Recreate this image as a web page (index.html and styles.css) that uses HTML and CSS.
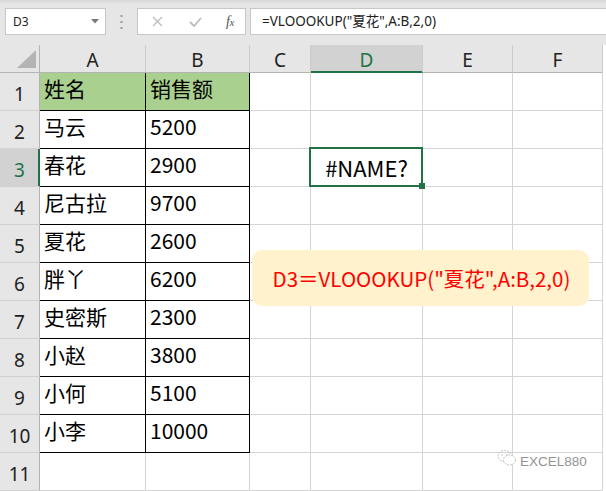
FILE: index.html
```html
<!DOCTYPE html>
<html>
<head>
<meta charset="utf-8">
<link rel="stylesheet" href="styles.css">
</head>
<body>
<div class="app">
  <div class="toolbar">
    <div class="namebox">
      <span class="nb-text">D3</span>
      <svg class="nb-arrow" width="8" height="5" viewBox="0 0 8 5"><path d="M0 0H8L4 4.5Z" fill="#7a7a7a"/></svg>
    </div>
    <div class="sep">
      <svg width="3" height="14" viewBox="0 0 3 14"><rect x="0.5" y="0" width="2" height="2" fill="#9a9a9a"/><rect x="0.5" y="6" width="2" height="2" fill="#9a9a9a"/><rect x="0.5" y="12" width="2" height="2" fill="#9a9a9a"/></svg>
    </div>
    <div class="fxbtns">
      <svg class="btn-x" width="11" height="11" viewBox="0 0 11 11"><path d="M1 1L10 10M10 1L1 10" stroke="#bdbdbd" stroke-width="1.4" fill="none"/></svg>
      <svg class="btn-ok" width="13" height="10" viewBox="0 0 13 10"><path d="M1 5L5 9L12 1" stroke="#bdbdbd" stroke-width="1.8" fill="none"/></svg>
      <span class="btn-fx">f<span class="fx-x">x</span></span>
    </div>
    <div class="formula">=VLOOOKUP("夏花",A:B,2,0)</div>
  </div>

  <div class="sheet">
    <div class="grid">
      <div class="ch corner"><span class="tri"></span></div>
      <div class="ch">A</div>
      <div class="ch">B</div>
      <div class="ch">C</div>
      <div class="ch sel">D</div>
      <div class="ch">E</div>
      <div class="ch">F</div>

      <div class="rh">1</div>
      <div class="c t hd">姓名</div><div class="c t hd">销售额</div><div class="c"></div><div class="c"></div><div class="c"></div><div class="c"></div>

      <div class="rh">2</div>
      <div class="c t">马云</div><div class="c t">5200</div><div class="c"></div><div class="c"></div><div class="c"></div><div class="c"></div>

      <div class="rh sel">3</div>
      <div class="c t">春花</div><div class="c t">2900</div><div class="c"></div>
      <div class="c active"><span class="err">#NAME?</span><span class="selbox"></span><span class="handle"></span></div>
      <div class="c"></div><div class="c"></div>

      <div class="rh">4</div>
      <div class="c t">尼古拉</div><div class="c t">9700</div><div class="c"></div><div class="c"></div><div class="c"></div><div class="c"></div>

      <div class="rh">5</div>
      <div class="c t">夏花</div><div class="c t">2600</div><div class="c"></div><div class="c"></div><div class="c"></div><div class="c"></div>

      <div class="rh">6</div>
      <div class="c t">胖丫</div><div class="c t">6200</div><div class="c"></div><div class="c"></div><div class="c"></div><div class="c"></div>

      <div class="rh">7</div>
      <div class="c t">史密斯</div><div class="c t">2300</div><div class="c"></div><div class="c"></div><div class="c"></div><div class="c"></div>

      <div class="rh">8</div>
      <div class="c t">小赵</div><div class="c t">3800</div><div class="c"></div><div class="c"></div><div class="c"></div><div class="c"></div>

      <div class="rh">9</div>
      <div class="c t">小何</div><div class="c t">5100</div><div class="c"></div><div class="c"></div><div class="c"></div><div class="c"></div>

      <div class="rh">10</div>
      <div class="c t">小李</div><div class="c t">10000</div><div class="c"></div><div class="c"></div><div class="c"></div><div class="c"></div>

      <div class="rh">11</div>
      <div class="c"></div><div class="c"></div><div class="c"></div><div class="c"></div><div class="c"></div><div class="c"></div>
    </div>

    <div class="callout">D3＝VLOOOKUP("夏花",A:B,2,0)</div>

    <div class="watermark">
      <svg width="20" height="18" viewBox="0 0 20 18">
        <ellipse cx="7.5" cy="7" rx="6.5" ry="5.5" fill="none" stroke="#c4c4c4" stroke-width="1" stroke-dasharray="2 1"/>
        <ellipse cx="12.5" cy="11" rx="6" ry="5" fill="#fff" stroke="#c4c4c4" stroke-width="1" stroke-dasharray="2 1"/>
        <circle cx="5" cy="6" r="0.8" fill="#c4c4c4"/>
        <circle cx="10" cy="6" r="0.8" fill="#c4c4c4"/>
      </svg>
      <span>EXCEL880</span>
    </div>
  </div>
</div>
</body>
</html>
```

FILE: styles.css
```css
* { box-sizing: border-box; }
html, body { margin: 0; padding: 0; background: #ffffff; }
.app { width: 606px; height: 491px; overflow: hidden; font-family: "Noto Sans", "Noto Sans CJK SC", sans-serif; }

.toolbar {
  height: 45px;
  background: linear-gradient(#d6d6d6 0, #e6e6e6 4px, #e6e6e6 100%);
  display: flex;
  align-items: flex-start;
  padding: 8px 0 0 5px;
}
.namebox {
  width: 101px; height: 27px;
  background: #fff;
  border: 1px solid #c6c6c6;
  display: flex; align-items: center; justify-content: space-between;
  padding: 0 6px 0 7px;
  font-size: 12px; color: #222;
}
.nb-text { line-height: 1; }
.sep { width: 31px; height: 27px; display: flex; align-items: center; justify-content: center; }
.fxbtns {
  width: 109px; height: 27px;
  background: #fff;
  border: 1px solid #c6c6c6;
  position: relative;
  display: flex; align-items: center;
  padding-left: 14px;
}
.btn-x { margin-right: 26px; }
.btn-ok { margin-right: 24px; }
.btn-fx { font-family: "Liberation Serif", serif; font-style: italic; font-size: 14px; color: #555; letter-spacing: -0.5px; }
.fx-x { font-size: 11px; }
.formula {
  flex: 1;
  margin-left: 4px;
  height: 27px;
  background: #fff;
  border: 1px solid #c6c6c6;
  border-right: none;
  padding-left: 11px;
  font-size: 13.5px; line-height: 25px; color: #222;
  font-family: "Noto Sans", "Noto Sans CJK SC", sans-serif;
  white-space: nowrap;
}

.sheet { position: relative; height: 446px; }
.grid {
  display: grid;
  grid-template-columns: 40px 106px 104px 61px 112px 90px 90px;
  grid-template-rows: 28px repeat(11, 38px);
}
.ch {
  background: #e6e6e6;
  border-right: 1px solid #cbcbcb;
  border-bottom: 1px solid #b4b4b4;
  display: flex; align-items: center; justify-content: center;
  font-size: 19px; color: #222;
  padding-top: 2px;
}
.ch.corner { position: relative; border-right-color: #b4b4b4; }
.tri {
  position: absolute; right: 3px; bottom: 4px;
  width: 19px; height: 18px;
  background: #b4b4b4;
  clip-path: polygon(100% 0, 100% 100%, 0 100%);
}
.ch.sel {
  background: #d2d2d2;
  color: #217346;
  border-bottom-color: #217346;
  box-shadow: inset 0 -1px 0 #217346;
}
.rh {
  background: #e6e6e6;
  border-right: 1px solid #b4b4b4;
  border-bottom: 1px solid #d0d0d0;
  display: flex; align-items: center; justify-content: center;
  font-size: 19px; color: #222;
  padding-top: 4px;
}
.rh.sel {
  background: #d2d2d2;
  color: #217346;
  border-right-color: #217346;
  box-shadow: inset -1px 0 0 #217346;
}
.c {
  border-right: 1px solid #d4d4d4;
  border-bottom: 1px solid #d4d4d4;
  font-family: "Noto Sans CJK SC", sans-serif;
  font-size: 21px; color: #000;
  display: flex; align-items: center;
  padding-left: 4px;
  white-space: nowrap;
}
.c.t { border-right-color: #000; border-bottom-color: #000; padding-bottom: 7px; }
.c.hd { background: #a9d08e; }
.c.active { position: relative; justify-content: center; padding-left: 0; padding-bottom: 1px; }
.err { font-size: 22px; }
.selbox {
  position: absolute; left: -2px; top: -2px;
  width: 114px; height: 40px;
  border: 2px solid #217346;
}
.handle {
  position: absolute; left: 108px; top: 34px;
  width: 6px; height: 6px;
  background: #217346;
}

.callout {
  position: absolute; left: 252px; top: 205px;
  width: 337px; height: 56px;
  background: #fff2cc;
  border-radius: 10px;
  display: flex; align-items: center; justify-content: center;
  font-family: "Noto Sans CJK SC", sans-serif;
  font-size: 20.5px; color: #ff0000;
  white-space: nowrap;
  padding-left: 2px;
}

.watermark {
  position: absolute; left: 497px; top: 401px;
  display: flex; align-items: center; gap: 3px;
  font-family: "Liberation Sans", sans-serif;
  font-size: 13.5px; color: #939393;
}
.watermark span { padding-top: 8px; }
```
